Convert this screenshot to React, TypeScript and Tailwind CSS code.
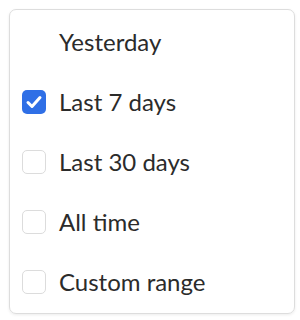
const items = [
  { label: "Yesterday", checkbox: false, checked: false },
  { label: "Last 7 days", checkbox: true, checked: true },
  { label: "Last 30 days", checkbox: true, checked: false },
  { label: "All time", checkbox: true, checked: false },
  { label: "Custom range", checkbox: true, checked: false },
];

function Box({ checked }: { checked: boolean }) {
  if (checked) {
    return (
      <span className="w-6 h-6 shrink-0 rounded-[5px] bg-[#2f6fe6] flex items-center justify-center">
        <svg width="24" height="24" viewBox="0 0 24 24" fill="none">
          <path
            d="M6 12.5l4 4 8-9"
            stroke="white"
            strokeWidth="3"
            strokeLinecap="round"
            strokeLinejoin="round"
          />
        </svg>
      </span>
    );
  }
  return <span className="w-6 h-6 shrink-0 rounded-[5px] border border-[#dcdcdc] bg-white" />;
}

export default function App() {
  return (
    <div className="w-[300px] h-[320px] bg-white p-[9px] font-['Lato',sans-serif]">
      <div className="w-[286px] h-[305px] rounded-[7px] border border-[#dddddd] shadow-[0_1px_3px_rgba(0,0,0,0.08)] pt-[2px] flex flex-col">
        {items.map((it) => (
          <div key={it.label} className="h-[60px] flex items-center pl-[12px] gap-[13px]">
            {it.checkbox ? <Box checked={it.checked} /> : <span className="w-6 h-6 shrink-0" />}
            <span className="text-[24px] text-[#2b2b2b] leading-none">{it.label}</span>
          </div>
        ))}
      </div>
    </div>
  );
}
